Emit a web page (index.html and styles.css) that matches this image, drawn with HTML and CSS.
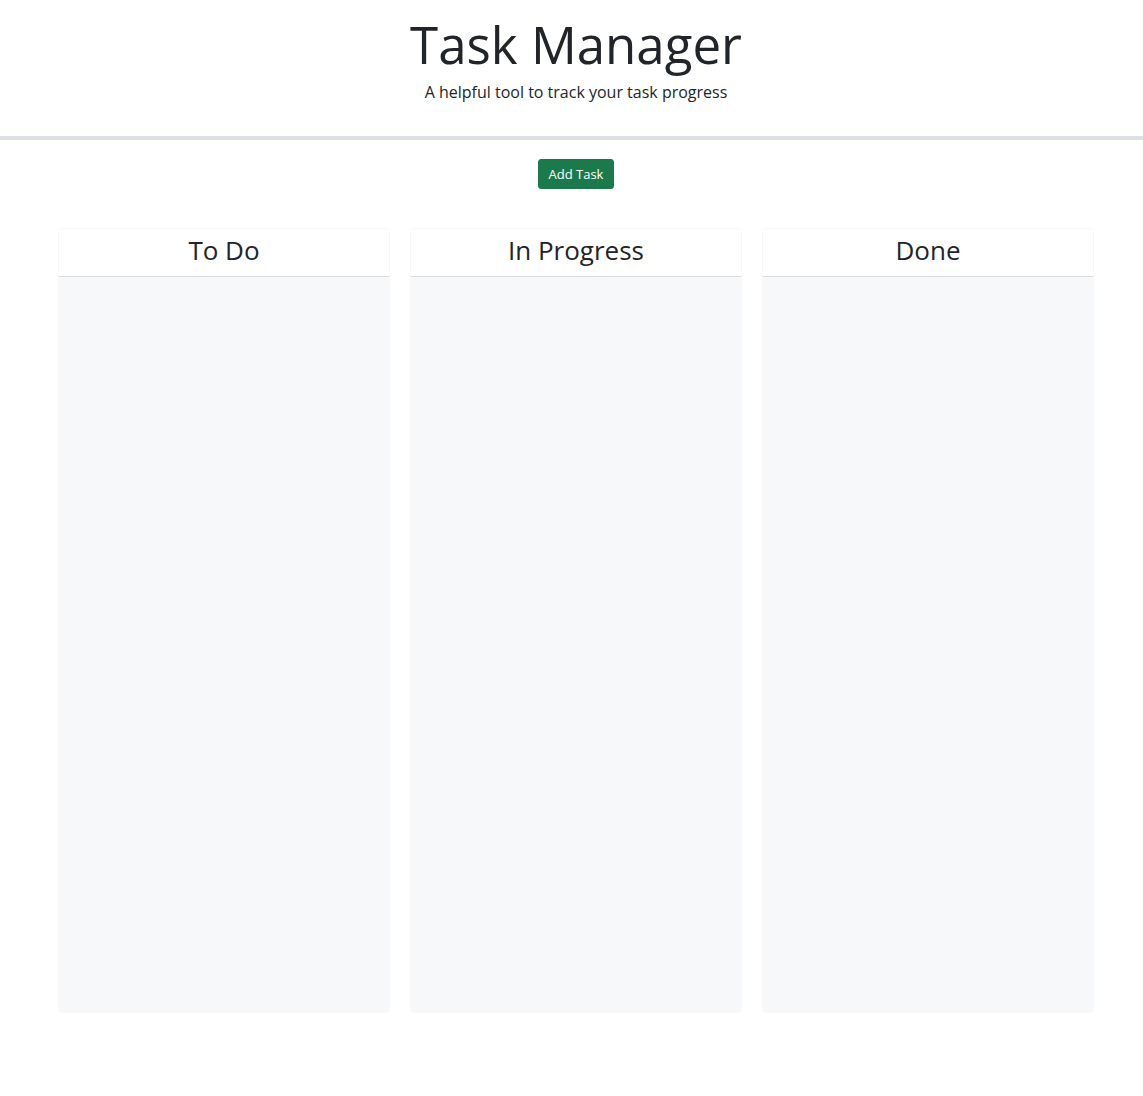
FILE: index.html
```html
<!DOCTYPE html>
<html lang="en">
<head>
<meta charset="utf-8">
<title>Task Manager</title>
<link rel="stylesheet" href="styles.css">
</head>
<body>
<header class="header">
  <h1 class="title">Task Manager</h1>
  <p class="subtitle">A helpful tool to track your task progress</p>
</header>
<main class="main">
  <div class="actions">
    <button class="btn-add" type="button">Add Task</button>
  </div>
  <div class="board">
    <section class="lane">
      <div class="lane-header"><h2 class="lane-title">To Do</h2></div>
      <div class="lane-body"></div>
    </section>
    <section class="lane">
      <div class="lane-header"><h2 class="lane-title">In Progress</h2></div>
      <div class="lane-body"></div>
    </section>
    <section class="lane">
      <div class="lane-header"><h2 class="lane-title">Done</h2></div>
      <div class="lane-body"></div>
    </section>
  </div>
</main>
</body>
</html>
```
FILE: styles.css
```css
* { box-sizing: border-box; }
html, body { margin: 0; padding: 0; }
body {
  font-family: "Open Sans", "Liberation Sans", sans-serif;
  color: #212529;
  background: #fff;
}
.header {
  text-align: center;
  padding: 12px 0 0 9px;
  height: 140px;
  border-bottom: 4px solid #dcdfe3;
}
.title {
  margin: 0;
  font-size: 51px;
  font-weight: 400;
  line-height: 64px;
}
.subtitle {
  margin: 4px 0 0;
  font-size: 16px;
  line-height: 24px;
}
.main {
  padding-left: 9px;
}
.actions {
  display: flex;
  justify-content: center;
  padding-top: 19px;
}
.btn-add {
  font-family: inherit;
  font-size: 13px;
  line-height: 20px;
  color: #fff;
  background: #1a7a4c;
  border: 1px solid #1a7a4c;
  border-radius: 3px;
  padding: 4px 10px;
  height: 30px;
  cursor: pointer;
}
.board {
  display: grid;
  grid-template-columns: repeat(3, 332px);
  justify-content: center;
  gap: 20px;
  margin-top: 39px;
}
.lane {
  display: flex;
  flex-direction: column;
  height: 785px;
  border: 1px solid rgba(0,0,0,0.03);
  border-radius: 4px;
  overflow: hidden;
}
.lane-header {
  background: #fff;
  border-bottom: 1px solid #dcdcde;
  height: 48px;
  padding-bottom: 6px;
  display: flex;
  align-items: center;
  justify-content: center;
}
.lane-title {
  margin: 0;
  font-size: 26px;
  font-weight: 400;
  line-height: 36px;
}
.lane-body {
  flex: 1;
  background: #f7f8fa;
}
```
